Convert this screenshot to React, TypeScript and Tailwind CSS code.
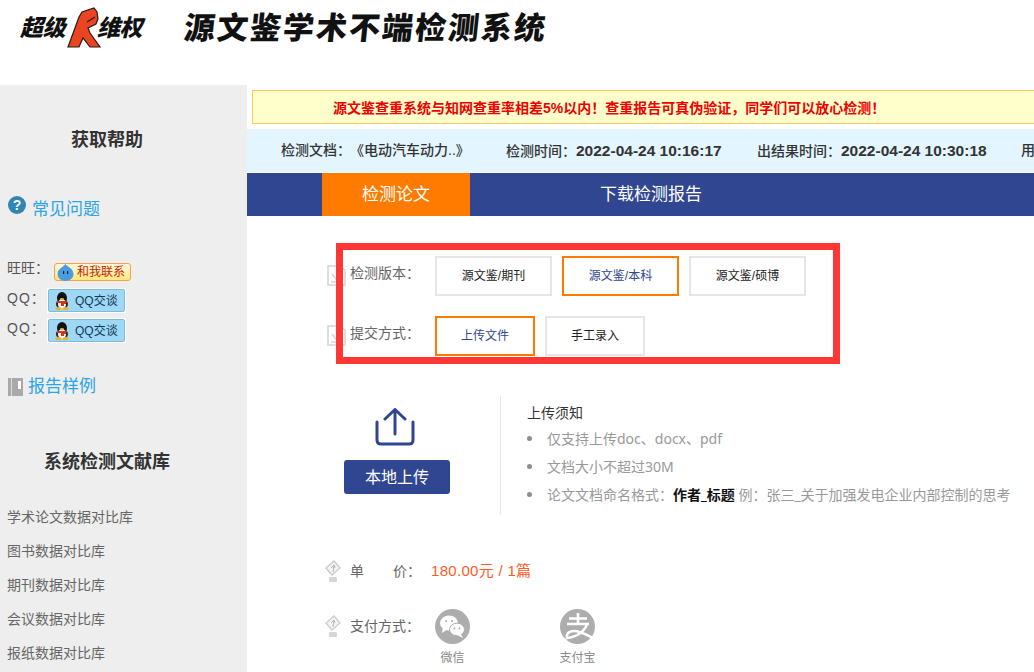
import React from 'react';

const FONT = "font-['Liberation_Sans','Noto_Sans_CJK_SC',sans-serif]";

const FistLogo = () => (
  <svg width="36" height="42" viewBox="0 0 36 42" className="shrink-0">
    <path d="M2 40 L13 10 L16 5 L28 1 L31 5 L32 12 L30 17 L22 21 L24 26 L34 40 L24 40 L17 31 L13 40 Z" fill="#ea4520" stroke="#2a1a14" strokeWidth="1.2" />
    <path d="M21 15 L29 10" stroke="#2a1a14" strokeWidth="1.2" />
  </svg>
);

const Header = () => (
  <header className="h-[85px] flex items-start bg-white">
    <div className="w-[184px] flex items-center pl-[20px]">
      <span className="w-[46px] text-[23px] leading-[56px] font-black italic text-[#111] tracking-[-0.5px] whitespace-nowrap">超级</span>
      <FistLogo />
      <span className="-ml-[5px] text-[23px] leading-[56px] font-black italic text-[#111] tracking-[-0.5px] whitespace-nowrap">维权</span>
    </div>
    <h1 className="text-[31px] leading-[58px] font-black text-[#111] tracking-[2px] whitespace-nowrap [transform:skewX(-6deg)]">源文鉴学术不端检测系统</h1>
  </header>
);

const HelpIcon = () => (
  <div className="w-[18px] h-[18px] rounded-full bg-[#2f84b8] text-white text-[14px] leading-[18px] font-bold text-center">?</div>
);

const BookIcon = () => (
  <svg width="15" height="18" viewBox="0 0 15 18">
    <rect width="15" height="18" fill="#a9a9a9" />
    <rect x="3" y="0" width="1" height="18" fill="#ddd" />
    <rect x="10" y="3" width="3" height="8" fill="#fff" />
  </svg>
);

const Penguin = () => (
  <svg width="16" height="18" viewBox="0 0 16 18">
    <ellipse cx="8" cy="6" rx="5" ry="6" fill="#111" />
    <ellipse cx="8" cy="12" rx="6" ry="5" fill="#222" />
    <ellipse cx="8" cy="12" rx="4" ry="5" fill="#fff" />
    <path d="M3 9 H13 L12 12 H10 L10 14 H7 L7 11 H3 Z" fill="#d8341c" />
    <ellipse cx="8" cy="7" rx="2" ry="1" fill="#f0b020" />
    <ellipse cx="4.5" cy="16.5" rx="3" ry="1.5" fill="#f0b020" />
    <ellipse cx="11.5" cy="16.5" rx="3" ry="1.5" fill="#f0b020" />
  </svg>
);

const WangIcon = () => (
  <svg width="17" height="17" viewBox="0 0 17 17" className="shrink-0">
    <path d="M8.5 0 C9 2 16.5 4 16.5 10 C16.5 14 13 17 8.5 17 C4 17 0.5 14 0.5 10 C0.5 5 6 3 8.5 0 Z" fill="#4a9be0" />
    <rect x="6" y="7" width="1.2" height="3" fill="#123" />
    <rect x="10" y="7" width="1.2" height="3" fill="#123" />
  </svg>
);

const QQRow = () => (
  <div className="flex items-start h-[30px] text-[14px] text-[#555]">
    <span className="w-[47px] pl-[7px] tracking-[1px] leading-[20px] whitespace-nowrap">QQ：</span>
    <div className="w-[79px] h-[25px] bg-white p-[1px]">
      <div className="w-[77px] h-[23px] flex items-center gap-[5px] pl-[5px] rounded-[2px] bg-[#9ed8f5] border border-[#7dbbdc] text-[12px] text-[#123a55]">
        <Penguin />
        <span className="whitespace-nowrap">QQ交谈</span>
      </div>
    </div>
  </div>
);

const LIBRARIES = ['学术论文数据对比库', '图书数据对比库', '期刊数据对比库', '会议数据对比库', '报纸数据对比库'];

const Sidebar = () => (
  <aside className="w-[247px] shrink-0 bg-[#eeeeee] h-[587px] overflow-hidden">
    <h3 className="mt-[43px] text-center pr-[33px] text-[18px] leading-[24px] font-bold text-[#333]">获取帮助</h3>
    <div className="mt-[45px] flex items-start pl-[8px] gap-[6px]">
      <div className="-mt-[1px]"><HelpIcon /></div>
      <span className="text-[17px] leading-[26px] text-[#2aa5ea]">常见问题</span>
    </div>
    <div className="mt-[35px] flex items-start h-[30px] text-[14px] text-[#555]">
      <span className="w-[54px] pl-[7px] leading-[20px] whitespace-nowrap">旺旺：</span>
      <div className="mt-[5px] w-[77px] h-[18px] flex items-center gap-[3px] pl-[2px] rounded-[3px] bg-gradient-to-b from-[#fff6e0] to-[#ffe97a] border border-[#f5a24a] text-[12px] text-[#c81e00]">
        <WangIcon />
        <span className="whitespace-nowrap">和我联系</span>
      </div>
    </div>
    <QQRow />
    <QQRow />
    <div className="mt-[26px] flex items-center pl-[8px] gap-[5px]">
      <BookIcon />
      <span className="text-[17px] leading-[26px] text-[#2aa5ea]">报告样例</span>
    </div>
    <h3 className="mt-[50px] text-center pr-[33px] text-[18px] leading-[24px] font-bold text-[#333]">系统检测文献库</h3>
    <ul className="mt-[26px] pl-[7px]">
      {LIBRARIES.map((name) => (
        <li key={name} className="h-[34px] text-[14px] leading-[34px] text-[#666] whitespace-nowrap">{name}</li>
      ))}
    </ul>
  </aside>
);

const DocIcon = () => (
  <svg width="19" height="22" viewBox="0 0 19 22" fill="none" stroke="#d4d4d4" strokeWidth="1.5" className="shrink-0">
    <path d="M1 2 H13 L18 6 V21 H1 Z" />
    <path d="M5 10 L9 15 L13 10 M4 18 H14" />
  </svg>
);

const PenIcon = () => (
  <svg width="16" height="23" viewBox="0 0 16 23" fill="none" stroke="#cfcfcf" strokeWidth="1.5" className="shrink-0">
    <path d="M9 1 L15 8 L7 15 L1 8 Z" fill="#f4f4f4" />
    <path d="M6 8 L9 5 L10 8 M9 5 L8 12" strokeWidth="1" stroke="#b5b5b5" />
    <rect x="4" y="17" width="8" height="5" rx="1" fill="#d6d6d6" stroke="none" />
  </svg>
);

const OptionButton = ({ label, active, width }: { label: string; active?: boolean; width: string }) => (
  <button className={`${width} h-[40px] border-2 bg-white text-[12px] ${active ? 'border-[#ff7b00] text-[#304691]' : 'border-[#e6e6e6] text-[#222]'}`}>
    {label}
  </button>
);

const OptionRow = ({ label, children }: { label: string; children: React.ReactNode }) => (
  <div className="flex items-start h-[40px]">
    <div className="mt-[8px]"><DocIcon /></div>
    <span className="ml-[4px] w-[85px] text-[14px] leading-[18px] mt-[8px] text-[#666] whitespace-nowrap">{label}</span>
    <div className="flex gap-[10px]">{children}</div>
  </div>
);

const UploadIcon = () => (
  <svg width="40" height="38" viewBox="0 0 40 38" fill="none" stroke="#304691" strokeWidth="3" strokeLinecap="round" strokeLinejoin="round">
    <path d="M20 26 V2 M10 11 L20 1.5 L30 11" />
    <path d="M2 14 V32 Q2 36 6 36 H34 Q38 36 38 32 V14" />
  </svg>
);

const NOTES: React.ReactNode[] = [
  '仅支持上传doc、docx、pdf',
  '文档大小不超过30M',
  <>
    论文文档命名格式：<b className="text-[#111]">作者_标题</b> 例：张三_关于加强发电企业内部控制的思考
  </>,
];

const WechatLogo = () => (
  <svg width="35" height="35" viewBox="0 0 35 35">
    <circle cx="17.5" cy="17.5" r="17.5" fill="#adadad" />
    <ellipse cx="14" cy="14" rx="9" ry="7.5" fill="#fff" />
    <path d="M8 18 L7 24 L13 20 Z" fill="#fff" />
    <ellipse cx="22" cy="20.5" rx="7.5" ry="6.3" fill="#fff" stroke="#adadad" strokeWidth="1" />
    <path d="M26 25 L28 29 L22 26 Z" fill="#fff" />
    <circle cx="11" cy="12" r="1.1" fill="#adadad" />
    <circle cx="17" cy="12" r="1.1" fill="#adadad" />
    <circle cx="19.5" cy="19.5" r="1" fill="#adadad" />
    <circle cx="24.5" cy="19.5" r="1" fill="#adadad" />
  </svg>
);

const AlipayLogo = () => (
  <svg width="35" height="35" viewBox="0 0 35 35">
    <circle cx="17.5" cy="17.5" r="17.5" fill="#adadad" />
    <path d="M9 9.5 H27 M18 4 V15 M7 15 H29 M27 15 C25 22 17 28 7 29 C6 26 8 22 14 22 C20 22 27 26 33 29" fill="none" stroke="#fff" strokeWidth="2.6" />
  </svg>
);

const Main = () => (
  <main className="flex-1 min-w-0 overflow-hidden">
    <div className="ml-[5px] mt-[5px] -mr-[10px] h-[34px] border border-[#ffc95c] bg-[#ffffcc] pl-[80px] text-[14px] leading-[34px] font-bold text-[#f00000] whitespace-nowrap">
      源文鉴查重系统与知网查重率相差5%以内！查重报告可真伪验证，同学们可以放心检测！
    </div>
    <div className="mt-[5px] h-[43px] bg-[#e3f5fe] flex items-center pl-[34px] text-[14px] font-medium text-[#333] whitespace-nowrap overflow-hidden">
      <span className="w-[225px] shrink-0">检测文档：<span className="ml-[6px]">《电动汽车动力..》</span></span>
      <span className="w-[251px] shrink-0">检测时间：<b className="text-[15.5px]">2022-04-24 10:16:17</b></span>
      <span className="w-[264px] shrink-0">出结果时间：<b className="text-[15.5px]">2022-04-24 10:30:18</b></span>
      <span className="shrink-0">用户</span>
    </div>
    <nav className="mt-[1px] h-[43px] bg-[#304691] flex pl-[75px] text-[17px] text-white">
      <div className="w-[148px] bg-[#ff7b00] text-center leading-[43px]">检测论文</div>
      <div className="w-[362px] text-center leading-[43px]">下载检测报告</div>
    </nav>

    <section className="relative pt-[40px] pl-[80px]">
      <OptionRow label="检测版本：">
        <OptionButton label="源文鉴/期刊" width="w-[117px]" />
        <OptionButton label="源文鉴/本科" width="w-[117px]" active />
        <OptionButton label="源文鉴/硕博" width="w-[117px]" />
      </OptionRow>
      <div className="mt-[20px]">
        <OptionRow label="提交方式：">
          <OptionButton label="上传文件" width="w-[100px]" active />
          <OptionButton label="手工录入" width="w-[100px]" />
        </OptionRow>
      </div>
      {/* annotation frame drawn over the options */}
      <div className="absolute left-[89px] top-[27px] w-[504px] h-[121px] border-[7px] border-[#ff3636] pointer-events-none" />
    </section>

    <section className="mt-[40px] flex items-stretch pl-[97px]">
      <div className="w-[106px] pt-[12px] flex flex-col items-center">
        <div className="-ml-[4px]"><UploadIcon /></div>
        <button className="mt-[14px] w-[106px] h-[34px] rounded-[3px] bg-[#304691] text-white text-[16px] leading-[36px]">本地上传</button>
      </div>
      <div className="ml-[50px] w-[1px] h-[118px] bg-[#e5e5e5]" />
      <div className="ml-[26px] whitespace-nowrap">
        <h4 className="mt-[7px] text-[14px] leading-[20px] font-normal text-[#333]">上传须知</h4>
        <ul className="mt-[1px] font-['Noto_Sans','Noto_Sans_CJK_SC',sans-serif]">
          {NOTES.map((note, i) => (
            <li key={i} className="h-[28px] flex items-center text-[14px] text-[#999]">
              <span className="w-[5px] h-[5px] rounded-full bg-[#8e8e8e] mr-[15px] shrink-0" />
              <span>{note}</span>
            </li>
          ))}
        </ul>
      </div>
    </section>

    <section className="mt-[46px] pl-[78px]">
      <div className="flex items-center h-[22px] text-[14px] text-[#666]">
        <PenIcon />
        <span className="ml-[9px] w-[43px]">单</span>
        <span className="w-[38px]">价：</span>
        <span className="text-[15px] tracking-[0.3px] text-[#ff5a26] whitespace-pre">180.00元 / 1篇</span>
      </div>
      <div className="mt-[27px] flex items-start">
        <div className="mt-[6px]"><PenIcon /></div>
        <span className="ml-[9px] w-[85px] text-[14px] leading-[20px] mt-[7px] text-[#666] whitespace-nowrap">支付方式：</span>
        <div className="flex gap-[90px] text-[12px] text-[#888]">
          <div className="w-[35px] flex flex-col items-center">
            <WechatLogo />
            <span className="mt-[5px] whitespace-nowrap">微信</span>
          </div>
          <div className="w-[35px] flex flex-col items-center">
            <AlipayLogo />
            <span className="mt-[5px] whitespace-nowrap">支付宝</span>
          </div>
        </div>
      </div>
    </section>
  </main>
);

export default function App() {
  return (
    <div className={`w-[1034px] h-[672px] overflow-hidden bg-white ${FONT}`}>
      <Header />
      <div className="flex">
        <Sidebar />
        <Main />
      </div>
    </div>
  );
}
